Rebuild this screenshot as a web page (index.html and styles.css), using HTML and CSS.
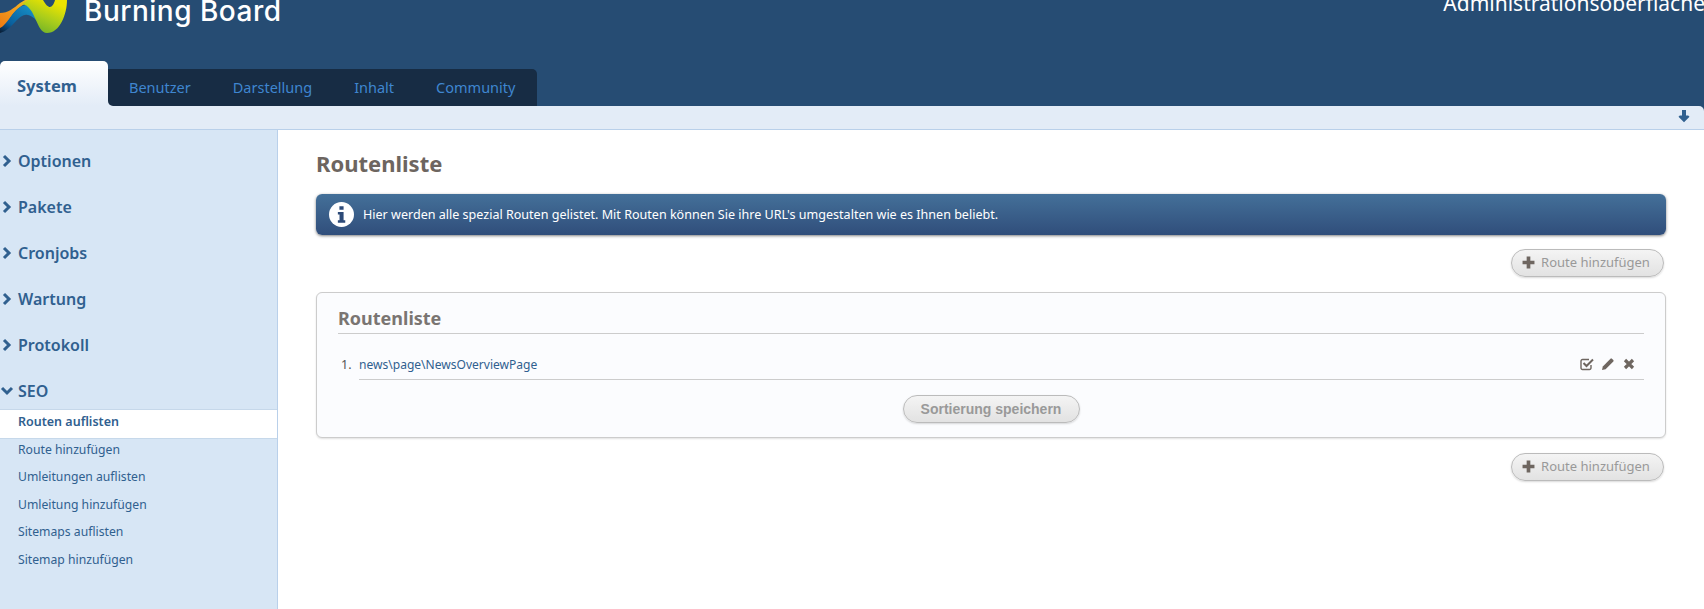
FILE: index.html
```html
<!DOCTYPE html>
<html lang="de">
<head>
<meta charset="utf-8">
<title>Routenliste</title>
<link rel="stylesheet" href="styles.css">
</head>
<body>
<header class="header">
  <div class="top">
    <div class="brand">
      <svg class="logo" viewBox="0 0 70 34" width="70" height="34" aria-hidden="true">
        <defs>
          <linearGradient id="gw" x1="0" y1="1" x2="0.6" y2="0"><stop offset="0" stop-color="#58a82e"/><stop offset=".55" stop-color="#a8cc1c"/><stop offset="1" stop-color="#ece400"/></linearGradient>
          <linearGradient id="bw" x1="0" y1="1" x2="1" y2="0"><stop offset="0" stop-color="#0a1a30"/><stop offset=".3" stop-color="#0a5f9c"/><stop offset="1" stop-color="#1a9ad0"/></linearGradient>
          <linearGradient id="ow" x1="0" y1="1" x2="1" y2="0"><stop offset="0" stop-color="#ee7a10"/><stop offset=".6" stop-color="#f2a020"/><stop offset="1" stop-color="#e8d020"/></linearGradient>
        </defs>
        <path fill="url(#ow)" d="M0 13C8 13 14 8 20 3L25 0H34C22 4 14 10 8 22L3 28H0Z"/>
        <path fill="url(#bw)" d="M0 33V28C8 25 14 6 26 5C32 5 35 12 39 23C34 18 30 14 25 15C17 16 12 30 0 33Z"/>
        <path fill="url(#gw)" d="M28 0H43C46 5 48 7 50 7C52 7 54 4 55 0H67C67 14 60 33 47 33C36 33 36 6 22 4Z"/>
      </svg>
      <span class="wordmark">Burning Board</span>
    </div>
    <div class="admin-title">Administrationsoberfläche</div>
  </div>
  <nav class="tabs">
    <a class="tab-active">System</a>
    <div class="tab-bar">
      <a class="tab">Benutzer</a>
      <a class="tab">Darstellung</a>
      <a class="tab">Inhalt</a>
      <a class="tab">Community</a>
    </div>
  </nav>
</header>
<div class="subbar">
  <svg class="arrow-down" viewBox="0 0 14 14" width="14" height="14" aria-hidden="true"><path d="M5 1h4v5.500h2.200l1.300 1.300L7 13.200 1.500 7.800l1.300-1.300H5z"/></svg>
</div>
<div class="layout">
  <aside class="sidebar">
    <h2 class="sec"><svg class="chev" viewBox="0 0 12 14" width="12" height="14" aria-hidden="true"><path d="M3 2l5 5-5 5"/></svg>Optionen</h2>
    <h2 class="sec"><svg class="chev" viewBox="0 0 12 14" width="12" height="14" aria-hidden="true"><path d="M3 2l5 5-5 5"/></svg>Pakete</h2>
    <h2 class="sec"><svg class="chev" viewBox="0 0 12 14" width="12" height="14" aria-hidden="true"><path d="M3 2l5 5-5 5"/></svg>Cronjobs</h2>
    <h2 class="sec"><svg class="chev" viewBox="0 0 12 14" width="12" height="14" aria-hidden="true"><path d="M3 2l5 5-5 5"/></svg>Wartung</h2>
    <h2 class="sec"><svg class="chev" viewBox="0 0 12 14" width="12" height="14" aria-hidden="true"><path d="M3 2l5 5-5 5"/></svg>Protokoll</h2>
    <h2 class="sec sec-open"><svg class="chev" viewBox="0 0 14 12" width="14" height="12" aria-hidden="true"><path d="M2 3l5 5 5-5"/></svg>SEO</h2>
    <ul class="sublist">
      <li class="sub sub-active">Routen auflisten</li>
      <li class="sub">Route hinzufügen</li>
      <li class="sub">Umleitungen auflisten</li>
      <li class="sub">Umleitung hinzufügen</li>
      <li class="sub">Sitemaps auflisten</li>
      <li class="sub">Sitemap hinzufügen</li>
    </ul>
  </aside>
  <main class="main">
    <h1 class="title">Routenliste</h1>
    <div class="info">
      <svg class="info-icon" viewBox="0 0 24 24" width="25" height="25" aria-hidden="true"><circle cx="12" cy="12" r="12" fill="#fff"/><path fill="#2c4a78" d="M10 4h4v3.400h-4zM8.500 9.500H14v8h1.600V20H8.500v-2.500h1.600v-5.500H8.500z"/></svg>
      <span>Hier werden alle spezial Routen gelistet. Mit Routen können Sie ihre URL's umgestalten wie es Ihnen beliebt.</span>
    </div>
    <div class="actions">
      <a class="btn btn-add"><svg class="plus" viewBox="0 0 12 12" width="13" height="13" aria-hidden="true"><path d="M4.300 .5h3.400v3.800h3.800v3.400H7.700v3.800H4.300V7.700H.5V4.300h3.800z"/></svg>Route hinzufügen</a>
    </div>
    <section class="panel">
      <h2 class="panel-title">Routenliste</h2>
      <div class="row">
        <span class="num">1.</span>
        <div class="row-body">
          <a class="link">news\page\NewsOverviewPage</a>
          <div class="row-icons">
            <svg viewBox="0 0 14 14" width="14" height="14" aria-hidden="true"><path class="i-line" d="M11 8v3a1.500 1.500 0 0 1-1.500 1.500h-7A1.500 1.500 0 0 1 1 11V4a1.500 1.500 0 0 1 1.500-1.500H9"/><path class="i-line i-thick" d="M3.500 6l3 3L13 2.500"/></svg>
            <svg viewBox="0 0 14 14" width="14" height="14" aria-hidden="true"><path class="i-fill" d="M1 13l.8-3.600L9.500 1.700a1 1 0 0 1 1.400 0l1.400 1.400a1 1 0 0 1 0 1.400L4.600 12.200z"/></svg>
            <svg viewBox="0 0 14 14" width="14" height="14" aria-hidden="true"><path class="i-line i-x" d="M3 3l8 8M11 3l-8 8"/></svg>
          </div>
        </div>
      </div>
      <div class="save-row"><a class="btn btn-save">Sortierung speichern</a></div>
    </section>
    <div class="actions">
      <a class="btn btn-add"><svg class="plus" viewBox="0 0 12 12" width="13" height="13" aria-hidden="true"><path d="M4.300 .5h3.400v3.800h3.800v3.400H7.700v3.800H4.300V7.700H.5V4.300h3.800z"/></svg>Route hinzufügen</a>
    </div>
  </main>
</div>
</body>
</html>
```
FILE: styles.css
```css
* { box-sizing: border-box; }
html, body { margin: 0; height: 609px; overflow: hidden; }
body { font-family: "Noto Sans", "Open Sans", sans-serif; font-size: 13px; color: #555; background: #264c73; display: flex; flex-direction: column; }
h1, h2, ul { margin: 0; padding: 0; list-style: none; }

.header { height: 106px; background: #264c73; display: flex; flex-direction: column; justify-content: space-between; overflow: hidden; flex: none; }
.top { display: flex; justify-content: space-between; align-items: flex-start; height: 34px; }
.brand { display: flex; align-items: flex-start; gap: 14px; }
.logo { display: block; }
.wordmark { font-family: "Inter", sans-serif; font-size: 28px; line-height: 36px; margin-top: -7px; color: #fff; letter-spacing: .5px; font-weight: 500; }
.admin-title { font-size: 21px; line-height: 26px; margin-top: -10px; color: #fff; white-space: nowrap; margin-right: -1px; }

.tabs { display: flex; align-items: flex-end; }
.tab-active { position: relative; width: 108px; height: 45px; background: linear-gradient(#fff, #e3ecf7); border-radius: 5px 5px 0 0; color: #30608f; font-weight: 700; font-size: 16.500px; padding-left: 17px; line-height: 50px; }
.tab-active::after { content: ""; position: absolute; right: -5px; bottom: 0; width: 5px; height: 5px; background: #e3ecf7; }
.tab-bar { position: relative; height: 37px; background: #172c44; border-radius: 0 5px 0 5px; display: flex; gap: 42px; padding: 0 22px 2px 21px; align-items: center; }
.tab { color: #3f86d0; font-size: 14.500px; }

.subbar { height: 24px; flex: none; background: #e3ecf7; border-bottom: 1px solid #b9d0ea; border-top-right-radius: 5px; display: flex; justify-content: flex-end; align-items: center; padding: 0 13px 3px 0; }
.arrow-down { fill: #30608f; }

.layout { display: flex; flex: 1; min-height: 0; background: #fff; }
.sidebar { width: 278px; flex: none; background: #d7e6f5; border-right: 1px solid #b9d0ea; padding-top: 15px; }
.sec { height: 34px; margin-bottom: 12px; display: flex; align-items: center; color: #30608f; font-size: 16px; font-weight: 600; line-height: 30px; padding: 0 0 3px 1px; }
.sec .chev { margin-right: 5px; flex: none; }
.sec-open { margin-bottom: 1px; padding-left: 0; }
.sec-open .chev { margin-right: 4px; }
.chev path { fill: none; stroke: #30608f; stroke-width: 3; }
.sublist { display: flex; flex-direction: column; }
.sub { height: 27.600px; padding-left: 18px; line-height: 24px; color: #30608f; font-size: 12.200px; }
.sub-active { background: #fff; font-size: 12.500px; font-weight: 600; box-shadow: 0 -1px 0 #c6d8ea, 0 1px 0 #c6d8ea; }

.main { flex: 1; min-width: 0; padding: 0 38px; display: flex; flex-direction: column; }
.title { font-size: 22px; line-height: 30px; margin-top: 18px; margin-bottom: 1px; color: #6d6560; font-weight: 700; }
.info { margin: 15px 0 14px 0; height: 41px; background: linear-gradient(#447099, #304e7b); border-radius: 6px; box-shadow: 0 1px 3px rgba(0,0,0,.5); color: #fff; display: flex; align-items: center; gap: 9px; padding-left: 13px; font-size: 12.550px; }
.info-icon { flex: none; }
.actions { display: flex; justify-content: flex-end; padding-right: 2px; }
.btn { height: 28px; width: 153px; border: 1px solid #bbb; border-radius: 14px; background: linear-gradient(#f4f4f4, #e2e2e2); box-shadow: 0 1px 2px rgba(0,0,0,.15); display: flex; align-items: center; justify-content: center; color: #999; font-size: 13px; gap: 6px; }
.btn-add { padding: 0 3px 2px 0; }
.plus { fill: #6e6660; flex: none; }

.panel { margin: 15px 0; height: 146px; background: #fbfcfe; border: 1px solid #ccc; border-radius: 6px; box-shadow: 0 1px 2px rgba(0,0,0,.12); padding: 13px 21px 0; }
.panel-title { font-size: 18px; line-height: 25px; height: 28px; color: #7a7572; font-weight: 700; border-bottom: 1px solid #ccc; }
.row { display: flex; align-items: stretch; margin-top: 16px; }
.num { width: 21px; padding-left: 3px; color: #555; line-height: 30px; flex: none; font-size: 12.500px; }
.row-body { flex: 1; height: 30px; border-bottom: 1px solid #ccc; display: flex; justify-content: space-between; align-items: center; padding-bottom: 1px; }
.link { color: #30608f; font-size: 12.050px; }
.row-icons { display: flex; gap: 7px; padding-right: 8px; }
.i-line { fill: none; stroke: #6e6660; stroke-width: 1.400; }
.i-thick { stroke-width: 2; }
.i-x { stroke-width: 3.200; }
.i-fill { fill: #6e6660; }
.save-row { display: flex; justify-content: center; margin-top: 15px; }
.btn.btn-save { width: 177px; font-family: "Liberation Sans", sans-serif; font-weight: 700; font-size: 14px; padding-bottom: 1px; }
```
